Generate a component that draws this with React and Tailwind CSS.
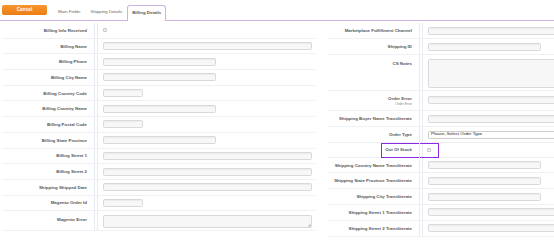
import React from 'react';

const font = { fontFamily: '"Liberation Sans", Arial, sans-serif' };

const leftRows = [
  { label: 'Billing Info Received', type: 'check' },
  { label: 'Billing Name', type: 'full' },
  { label: 'Billing Phone', type: 'mid' },
  { label: 'Billing City Name', type: 'mid' },
  { label: 'Billing Country Code', type: 'small' },
  { label: 'Billing Country Name', type: 'mid' },
  { label: 'Billing Postal Code', type: 'small' },
  { label: 'Billing State Province', type: 'mid' },
  { label: 'Billing Street 1', type: 'full' },
  { label: 'Billing Street 2', type: 'full' },
  { label: 'Shipping Shipped Date', type: 'full' },
  { label: 'Magento Order Id', type: 'small' },
];

const rightRows = [
  { label: 'Shipping Country Name Transliterate', type: 'mid', h: 'h-[15px]' },
  { label: 'Shipping State Province Transliterate', type: 'mid', h: 'h-[16px]' },
  { label: 'Shipping City Transliterate', type: 'mid', h: 'h-[16px]' },
  { label: 'Shipping Street 1 Transliterate', type: 'full', h: 'h-[15.5px]' },
  { label: 'Shipping Street 2 Transliterate', type: 'full', h: 'h-[16px]' },
];

function Field({ type }) {
  if (type === 'check') {
    return <div className="w-[4px] h-[4px] border border-[#c8c8c8] bg-[#eee] rounded-[1px]" />;
  }
  const w = type === 'full' ? 'w-[209px]' : type === 'mid' ? 'w-[113px]' : 'w-[40px]';
  return <div className={`${w} h-[8px] shrink-0 border border-[#d9d9d9] bg-[#f7f7f7] rounded-[1.5px] shadow-[inset_0_1px_1px_rgba(0,0,0,0.05)]`} />;
}

// simple label / control row, vertically centred
function Row({ label, children, h = 'h-[15.7px]' }) {
  return (
    <div className={`flex ${h} border-b border-[#eef0f3]`}>
      <div className="w-[92px] shrink-0 pr-[7px] border-r border-[#e4ebf3] flex items-center justify-end">
        <span className="text-[4.4px] leading-[5px] font-bold text-[#555] whitespace-nowrap">{label}</span>
      </div>
      <div className="ml-[2px] border-l border-[#e4ebf3] pl-[5px] flex-1 flex items-center">
        {children}
      </div>
    </div>
  );
}

export default function App() {
  return (
    <div className="w-[554px] h-[250px] overflow-hidden bg-white" style={font}>
      <div className="w-[700px]">
        {/* header */}
        <div className="flex h-[21px] border-b border-[#cdb2e2] pl-[2px]">
          <button className="mt-[5px] w-[45px] h-[10px] rounded-[2px] bg-gradient-to-b from-[#f7952f] to-[#ec7c14] text-white text-[4.8px] font-bold leading-[10px]">
            Cancel
          </button>
          <div className="flex items-end ml-[6px] gap-[1px]">
            <div className="px-[5px] h-[15px] flex items-center text-[4.4px] text-[#666]">Main Fields</div>
            <div className="px-[4px] h-[15px] flex items-center text-[4.4px] text-[#666]">Shipping Details</div>
            <div className="px-[4px] h-[16px] -mb-[1px] flex items-center text-[4.4px] font-bold text-[#555] border border-b-0 border-[#cdb2e2] rounded-t-[3px] bg-white">Billing Details</div>
          </div>
        </div>

        {/* body */}
        <div className="flex gap-[13px] pl-[3px] pt-[2px]">
          <div className="w-[312px] shrink-0">
            {leftRows.map((r) => (
              <Row key={r.label} label={r.label}>
                <Field type={r.type} />
              </Row>
            ))}
            <div className="flex h-[19.3px] border-b border-[#eef0f3]">
              <div className="w-[92px] shrink-0 pr-[7px] border-r border-[#e4ebf3] flex justify-end pt-[6px]">
                <span className="text-[4.4px] leading-[5px] font-bold text-[#555] whitespace-nowrap">Magento Error</span>
              </div>
              <div className="ml-[2px] border-l border-[#e4ebf3] pl-[5px] flex-1 pt-[3.5px]">
                <div className="w-[209px] h-[13px] border border-[#d9d9d9] bg-[#f7f7f7] rounded-[1.5px] relative">
                  <span className="absolute right-[1px] bottom-[0px] text-[3px] leading-[3px] text-[#aaa]">◢</span>
                </div>
              </div>
            </div>
          </div>

          <div className="w-[312px] shrink-0">
            <Row label="Marketplace Fulfillment Channel" h="h-[16px]">
              <Field type="full" />
            </Row>
            <Row label="Shipping ID" h="h-[16px]">
              <Field type="mid" />
            </Row>
            <div className="flex h-[36px] border-b border-[#eef0f3]">
              <div className="w-[92px] shrink-0 pr-[7px] border-r border-[#e4ebf3] flex justify-end pt-[6px]">
                <span className="text-[4.4px] leading-[5px] font-bold text-[#555] whitespace-nowrap">CS Notes</span>
              </div>
              <div className="ml-[2px] border-l border-[#e4ebf3] pl-[5px] flex-1 pt-[4px]">
                <div className="w-[209px] h-[29px] border border-[#d9d9d9] bg-[#f7f7f7] rounded-[1.5px]" />
              </div>
            </div>
            <div className="flex h-[20px] border-b border-[#eef0f3]">
              <div className="w-[92px] shrink-0 pr-[7px] border-r border-[#e4ebf3] flex flex-col items-end pt-[4.5px]">
                <span className="text-[4.4px] leading-[5px] font-bold text-[#555] whitespace-nowrap">Order Error</span>
                <span className="text-[3.3px] leading-[4px] text-[#888] mt-[1px]">Order Error</span>
              </div>
              <div className="ml-[2px] border-l border-[#e4ebf3] pl-[5px] flex-1 pt-[4.5px]">
                <Field type="full" />
              </div>
            </div>
            <Row label="Shipping Buyer Name Transliterate" h="h-[16px]">
              <Field type="full" />
            </Row>
            <Row label="Order Type" h="h-[16px]">
              <div className="w-[209px] h-[8px] border border-[#cfcfcf] bg-white rounded-[1px] flex items-center pl-[2px] text-[4.4px] text-[#222]">
                Please, Select Order Type
              </div>
            </Row>
            <div className="flex h-[15px] border-b border-[#eef0f3]">
              <div className="w-[92px] shrink-0 border-r border-[#e4ebf3] flex justify-end items-center">
                <div className="h-[15px] w-[38px] border-[1.5px] border-[#8a2be2] border-r-0 flex items-center justify-end pr-[7px]">
                  <span className="text-[4.4px] font-bold text-[#555] whitespace-nowrap">Out Of Stock</span>
                </div>
              </div>
              <div className="ml-[2px] border-l border-[#e4ebf3] flex-1 flex items-center">
                <div className="h-[15px] w-[19px] border-[1.5px] border-l-0 border-[#8a2be2] flex items-center pl-[7px] -ml-[3px] relative">
                  <div className="w-[4px] h-[4px] border border-[#c8c8c8] bg-[#eee] rounded-[1px]" />
                </div>
              </div>
            </div>
            {rightRows.map((r) => (
              <Row key={r.label} label={r.label} h={r.h}>
                <Field type={r.type} />
              </Row>
            ))}
          </div>
        </div>
      </div>
    </div>
  );
}
